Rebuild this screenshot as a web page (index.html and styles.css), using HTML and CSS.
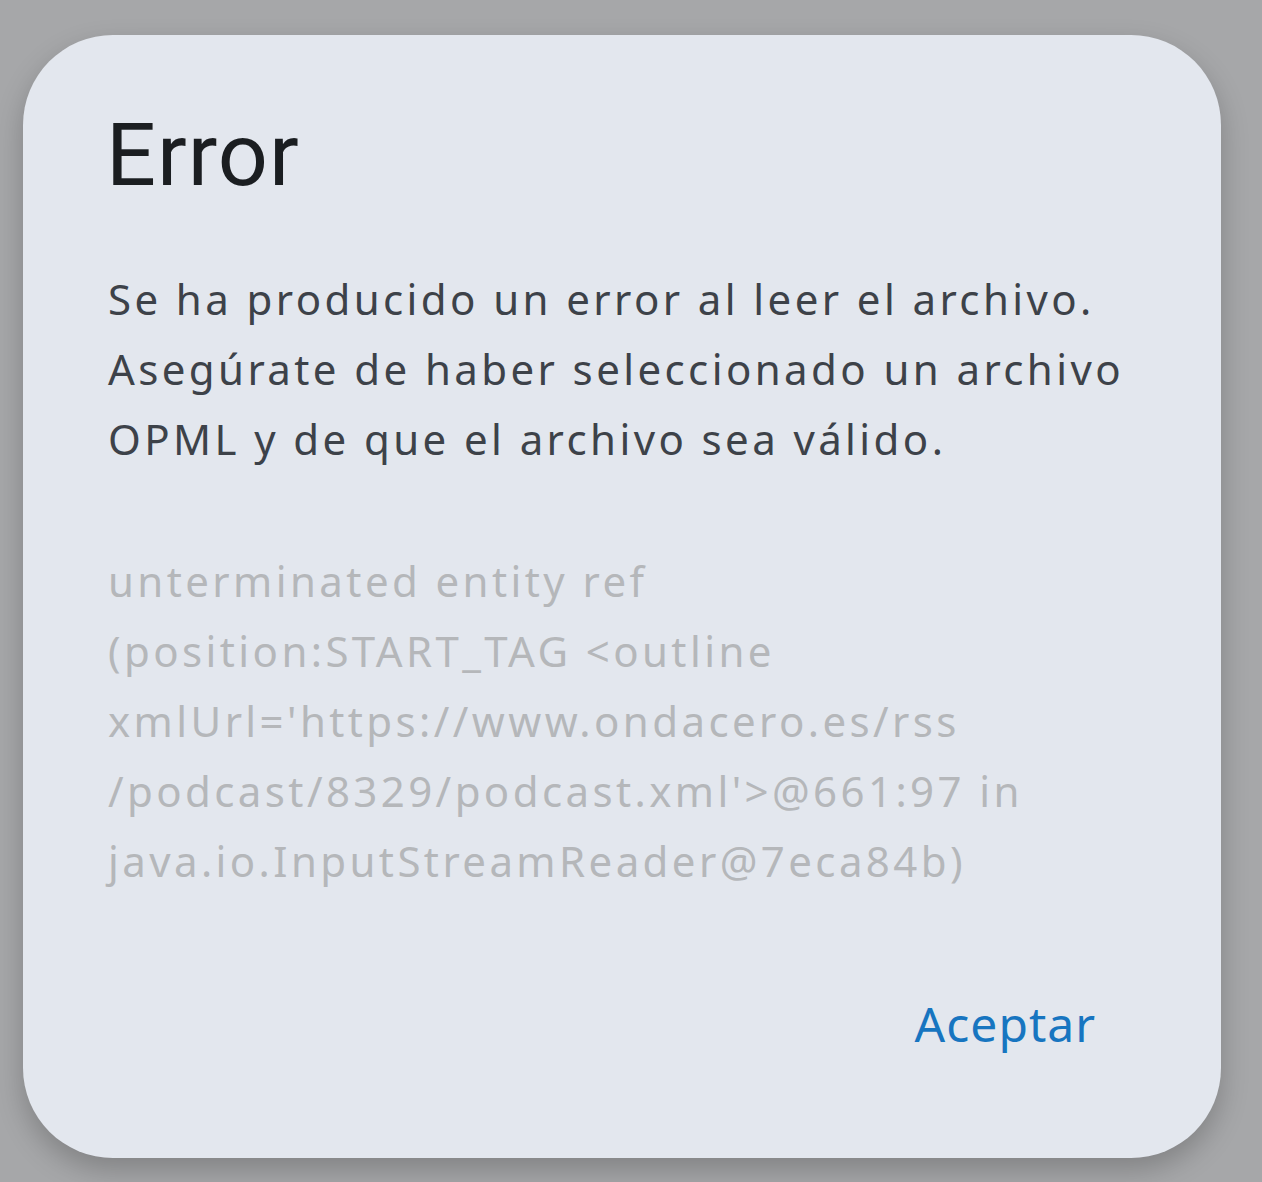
FILE: index.html
```html
<!DOCTYPE html>
<html lang="es">
<head>
<meta charset="utf-8">
<link rel="stylesheet" href="styles.css">
</head>
<body>
<div class="dialog">
  <h1 class="title">Error</h1>
  <p class="message">Se ha producido un error al leer el archivo.<br>Asegúrate de haber seleccionado un archivo<br>OPML y de que el archivo sea válido.</p>
  <p class="detail">unterminated entity ref<br>(position:START_TAG &lt;outline<br>xmlUrl='https://www.ondacero.es/rss<br>/podcast/8329/podcast.xml'&gt;@661:97 in<br>java.io.InputStreamReader@7eca84b)</p>
  <div class="actions">
    <button class="btn">Aceptar</button>
  </div>
</div>
</body>
</html>
```
FILE: styles.css
```css
html, body {
  margin: 0;
  padding: 0;
}
body {
  background: #a6a7a9;
  width: 1262px;
  height: 1182px;
  overflow: hidden;
  font-family: "Noto Sans", "Liberation Sans", sans-serif;
}
.dialog {
  margin: 35px 0 0 23px;
  width: 1198px;
  height: 1123px;
  box-sizing: border-box;
  padding: 0 85px;
  background: #e3e7ee;
  border-radius: 90px;
  box-shadow: 0 12px 28px rgba(0, 0, 0, 0.22);
  display: flex;
  flex-direction: column;
}
.title {
  margin: 70px 0 0 -2px;
  font-family: Roboto, "Noto Sans", sans-serif;
  font-weight: 400;
  font-size: 88px;
  line-height: 100px;
  color: #1b1e21;
  letter-spacing: 1px;
}
.message {
  margin: 59px 0 0 0;
  font-size: 42px;
  line-height: 70px;
  letter-spacing: 3.4px;
  color: #3d4249;
  white-space: nowrap;
}
.detail {
  margin: 72px 0 0 0;
  font-size: 42px;
  line-height: 70px;
  letter-spacing: 3.4px;
  color: #b5b7ba;
  white-space: nowrap;
}
.actions {
  display: flex;
  justify-content: flex-end;
  margin-top: auto;
  margin-bottom: 104px;
}
.btn {
  border: 0;
  background: none;
  padding: 0;
  margin-right: 40px;
  font-family: "Noto Sans", sans-serif;
  font-size: 48px;
  line-height: 60px;
  letter-spacing: 1px;
  color: #1775c0;
}
```
